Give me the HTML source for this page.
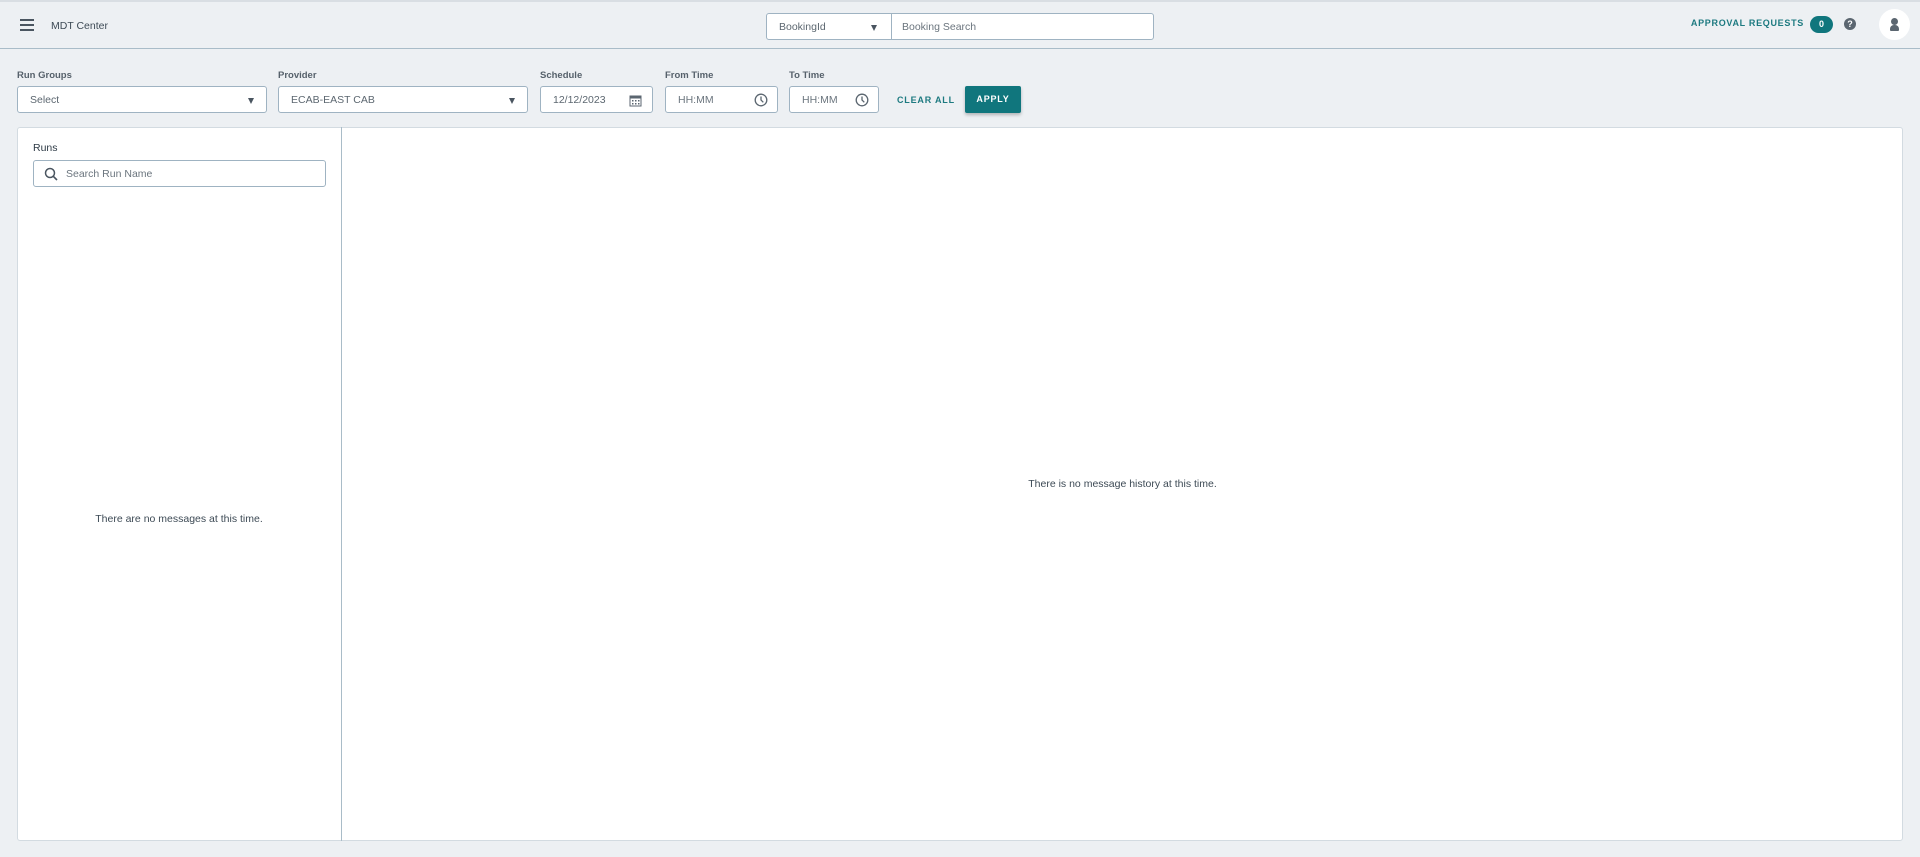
<!DOCTYPE html>
<html><head><meta charset="utf-8"><style>
*{box-sizing:border-box;margin:0;padding:0}
body{width:1920px;height:857px;background:#edf0f3;font-family:"Liberation Sans",sans-serif;color:#3d4a55;position:relative;overflow:hidden;font-size:10.5px}
.a{position:absolute}
.hdr{left:0;top:0;width:1920px;height:49px;border-top:2px solid #d9dee3;border-bottom:1px solid #a9bcc8;background:#edf0f3}
.inp{position:absolute;background:#fff;border:1px solid #9fb3c2;border-radius:3px;height:27px;font-size:10.5px;color:#5c6770;padding-left:12px;line-height:27px}
.lbl{position:absolute;top:70px;font-size:9.5px;font-weight:bold;color:#56616b}
.tri{position:absolute;right:12px;top:11px;width:0;height:0;border-left:3.5px solid transparent;border-right:3.5px solid transparent;border-top:6px solid #4a5560}
</style></head><body>
<div class="a hdr"></div>
<div class="a" style="left:20px;top:19px;width:14px;height:2px;background:#4a5560;box-shadow:0 5px 0 #4a5560,0 10px 0 #4a5560"></div>
<div class="a" style="left:51px;top:20px;font-size:10.5px;color:#3d4a55">MDT Center</div>
<div class="inp" style="left:766px;top:13px;width:126px;height:27px;border-radius:3px 0 0 3px">BookingId<div class="tri" style="right:14px"></div></div>
<div class="inp" style="left:891px;top:13px;width:263px;height:27px;border-radius:0 3px 3px 0;padding-left:10px;color:#6b757e">Booking Search</div>
<div class="a" style="right:116px;top:18px;font-size:9px;font-weight:bold;letter-spacing:0.7px;color:#1d7a80;white-space:nowrap">APPROVAL REQUESTS</div>
<div class="a" style="left:1810px;top:16px;width:23px;height:17px;border-radius:9px;background:#10767d;color:#fff;font-size:9px;font-weight:bold;text-align:center;line-height:17px">0</div>
<div class="a" style="left:1844px;top:18px;width:12px;height:12px;border-radius:50%;background:#5b6670;color:#fff;font-size:9px;font-weight:bold;text-align:center;line-height:12px">?</div>
<div class="a" style="left:1879px;top:9px;width:31px;height:31px;border-radius:50%;background:#fff"><div class="a" style="left:12px;top:9px;width:7px;height:7px;border-radius:50%;background:#5b6670"></div><div class="a" style="left:11px;top:16px;width:9px;height:6px;border-radius:4px 4px 1px 1px;background:#5b6670"></div></div>

<div class="lbl" style="left:17px">Run Groups</div>
<div class="lbl" style="left:278px">Provider</div>
<div class="lbl" style="left:540px">Schedule</div>
<div class="lbl" style="left:665px">From Time</div>
<div class="lbl" style="left:789px">To Time</div>
<div class="inp" style="left:17px;top:86px;width:250px">Select<div class="tri"></div></div>
<div class="inp" style="left:278px;top:86px;width:250px">ECAB-EAST CAB<div class="tri"></div></div>
<div class="inp" style="left:540px;top:86px;width:113px">12/12/2023
<svg class="a" style="right:10px;top:7px" width="13" height="13" viewBox="0 0 13 13"><rect x="1" y="2" width="11" height="10" fill="none" stroke="#5b6670"/><rect x="1" y="2" width="11" height="2.5" fill="#5b6670"/><g fill="#5b6670"><rect x="3" y="6" width="1.5" height="1.5"/><rect x="6" y="6" width="1.5" height="1.5"/><rect x="9" y="6" width="1.5" height="1.5"/><rect x="3" y="9" width="1.5" height="1.5"/><rect x="6" y="9" width="1.5" height="1.5"/><rect x="9" y="9" width="1.5" height="1.5"/></g></svg></div>
<div class="inp" style="left:665px;top:86px;width:113px;color:#6b757e">HH:MM
<svg class="a" style="right:9px;top:6px" width="14" height="14" viewBox="0 0 14 14"><circle cx="7" cy="7" r="5.8" fill="none" stroke="#5b6670" stroke-width="1.3"/><path d="M7 3.5V7l2.3 2.3" fill="none" stroke="#5b6670" stroke-width="1.3"/></svg></div>
<div class="inp" style="left:789px;top:86px;width:90px;color:#6b757e">HH:MM
<svg class="a" style="right:9px;top:6px" width="14" height="14" viewBox="0 0 14 14"><circle cx="7" cy="7" r="5.8" fill="none" stroke="#5b6670" stroke-width="1.3"/><path d="M7 3.5V7l2.3 2.3" fill="none" stroke="#5b6670" stroke-width="1.3"/></svg></div>
<div class="a" style="left:897px;top:95px;font-size:9px;font-weight:bold;letter-spacing:0.8px;color:#1d7a80">CLEAR ALL</div>
<div class="a" style="left:965px;top:86px;width:56px;height:27px;background:#10767d;border-radius:2px;color:#fff;font-size:9px;font-weight:bold;letter-spacing:0.8px;text-align:center;line-height:27px;box-shadow:0 2px 3px rgba(0,0,0,.25)">APPLY</div>

<div class="a" style="left:17px;top:127px;width:1886px;height:714px;background:#fff;border:1px solid #d3dbe1;border-radius:3px"></div>
<div class="a" style="left:341px;top:127px;width:1px;height:714px;background:#a9bcc8"></div>
<div class="a" style="left:33px;top:142px;font-size:10.5px;color:#2d3a45">Runs</div>
<div class="inp" style="left:33px;top:160px;width:293px;height:27px;padding-left:32px;color:#6b757e">Search Run Name
<svg class="a" style="left:10px;top:6px" width="14" height="14" viewBox="0 0 14 14"><circle cx="6" cy="6" r="4.5" fill="none" stroke="#4a5560" stroke-width="1.5"/><path d="M9.3 9.3L13 13" stroke="#4a5560" stroke-width="1.6"/></svg></div>
<div class="a" style="left:17px;top:513px;width:324px;text-align:center;color:#3d4a55">There are no messages at this time.</div>
<div class="a" style="left:342px;top:478px;width:1561px;text-align:center;color:#3d4a55">There is no message history at this time.</div>
</body></html>
